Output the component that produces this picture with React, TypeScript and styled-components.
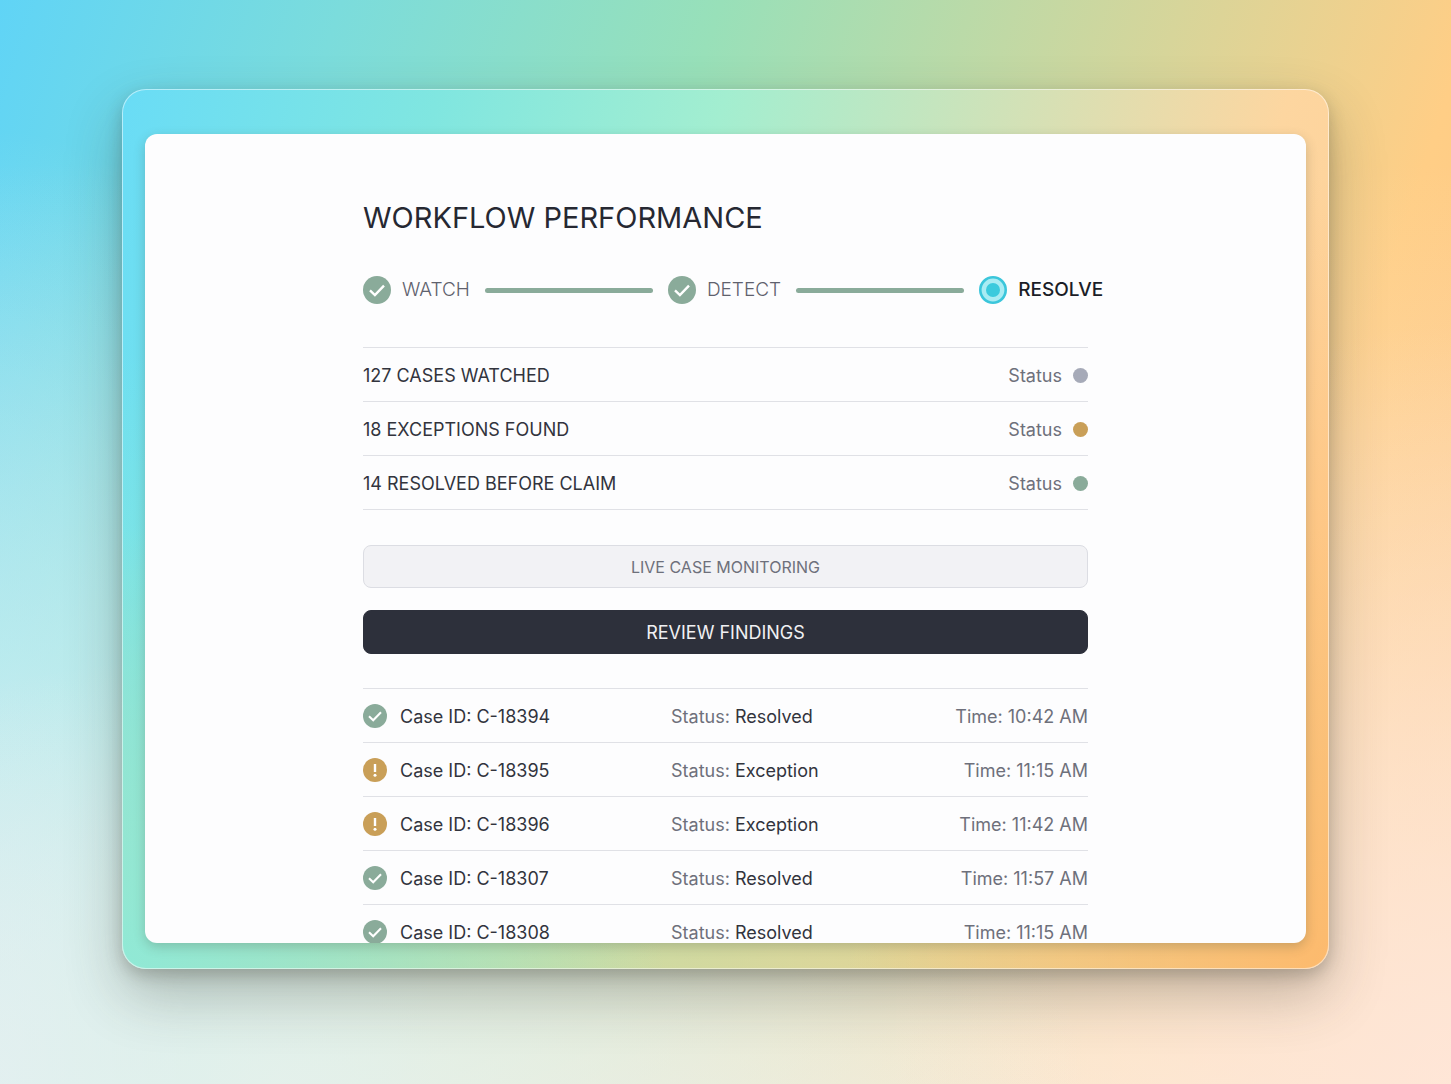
import React from "react";
import styled, { createGlobalStyle } from "styled-components";

const GlobalStyle = createGlobalStyle`
  *, *::before, *::after { box-sizing: border-box; }
  body {
    margin: 0;
    font-family: Inter, "Liberation Sans", sans-serif;
    color: #32343d;
    -webkit-font-smoothing: antialiased;
  }
`;

const sage = "#8aab9a";
const amber = "#c99f58";
const rule = "#e0e1e6";
const muted = "#6e707b";

const Page = styled.div`
  display: flex;
  height: 100vh;
  min-height: 480px;
  padding: 89px 122px 115px;
  background:
    radial-gradient(ellipse 55% 40% at 20% 100%, rgba(230, 241, 236, 0.85) 0%, rgba(232, 240, 230, 0) 100%),
    radial-gradient(ellipse 30% 88% at 0% 100%, rgba(222, 238, 244, 1) 0%, rgba(200, 240, 244, 0.6) 45%, rgba(160, 232, 236, 0) 100%),
    radial-gradient(ellipse 40% 70% at 100% 100%, rgba(255, 230, 216, 0.9) 0%, rgba(255, 228, 208, 0) 100%),
    linear-gradient(180deg, rgba(250, 240, 228, 0) 15%, rgba(250, 240, 228, 0.36) 60%, rgba(250, 240, 228, 0.74) 100%),
    linear-gradient(108deg, #60d4f6 0%, #7bdcdc 19%, #98e0b9 40%, #ffce86 82%, #ffc284 100%);
`;

const Frame = styled.div`
  display: flex;
  flex: 1;
  min-width: 0;
  padding: 44px 22px 25px;
  border: 1px solid rgba(255, 255, 255, 0.5);
  border-radius: 24px;
  background:
    radial-gradient(ellipse 45% 70% at 0% 100%, rgba(142, 234, 216, 0.95) 0%, rgba(142, 234, 216, 0) 100%) border-box,
    radial-gradient(ellipse 40% 90% at 100% 100%, rgba(255, 184, 106, 0.9) 0%, rgba(255, 184, 106, 0) 100%) border-box,
    linear-gradient(180deg, rgba(220, 208, 138, 0) 50%, rgba(220, 208, 138, 0.6) 100%) border-box,
    linear-gradient(105deg, #69dcf6 0%, #80e6e0 22%, #a3eed0 42%, #fdd6a0 81%, #ffcd92 100%) border-box;
  box-shadow: 0 26px 56px rgba(60, 60, 50, 0.3), 0 6px 16px rgba(60, 60, 50, 0.26);
`;

const Panel = styled.main`
  flex: 1;
  min-width: 0;
  padding: 64px 24px 0;
  overflow: hidden;
  border-radius: 12px;
  background: #fdfdfe;
  box-shadow: 0 4px 12px rgba(60, 70, 50, 0.24);
`;

const Content = styled.div`
  display: flex;
  flex-direction: column;
  max-width: 725px;
  margin: 0 auto;
`;

const Title = styled.h1`
  margin: 0;
  color: #262832;
  font-size: 29px;
  font-weight: 400;
  line-height: 40px;
`;

const Steps = styled.ol`
  display: flex;
  align-items: center;
  gap: 15px;
  margin: 37px 0 42px;
  padding: 0;
  list-style: none;
`;

const Step = styled.li<{ $active?: boolean }>`
  display: flex;
  flex: none;
  align-items: center;
  gap: 11px;
  font-size: 19px;
  line-height: 30px;
  font-weight: ${(p) => (p.$active ? 500 : 300)};
  color: ${(p) => (p.$active ? "#1b1d27" : "#5f616d")};
`;

const Connector = styled.li`
  flex: none;
  width: 168px;
  height: 5px;
  border-radius: 3px;
  background: ${sage};
`;

const Metrics = styled.ul`
  margin: 0 0 35px;
  padding: 0;
  border-top: 1px solid ${rule};
  list-style: none;
`;

const Metric = styled.li`
  display: flex;
  align-items: center;
  justify-content: space-between;
  height: 54px;
  padding-top: 1px;
  border-bottom: 1px solid ${rule};
  font-size: 18px;
`;

const MetricStatus = styled.span`
  display: flex;
  align-items: center;
  gap: 11px;
  color: ${muted};
`;

const Dot = styled.span<{ $color: string }>`
  width: 15px;
  height: 15px;
  border-radius: 50%;
  background: ${(p) => p.$color};
`;

const Actions = styled.div`
  display: grid;
  gap: 22px;
  margin-bottom: 34px;
`;

const Button = styled.button<{ $primary?: boolean }>`
  height: ${(p) => (p.$primary ? 44 : 43)}px;
  padding: 0;
  border: 1px solid ${(p) => (p.$primary ? "#2d303b" : "#dcdde3")};
  border-radius: 8px;
  background: ${(p) => (p.$primary ? "#2d303b" : "#f2f2f5")};
  color: ${(p) => (p.$primary ? "#f0f0f3" : muted)};
  font-family: inherit;
  font-size: ${(p) => (p.$primary ? 18 : 16)}px;
  font-weight: 400;
  cursor: pointer;
`;

const Cases = styled.table`
  width: 100%;
  table-layout: fixed;
  border-collapse: separate;
  border-spacing: 0;
  border-top: 1px solid ${rule};
  font-size: 18px;
`;

const Cell = styled.td<{ $width?: string; $end?: boolean }>`
  width: ${(p) => p.$width ?? "auto"};
  height: 54px;
  padding: 1px 0 0;
  border-bottom: 1px solid ${rule};
  color: ${(p) => (p.$end ? muted : "inherit")};
  text-align: ${(p) => (p.$end ? "right" : "left")};
  white-space: nowrap;
`;

const CaseName = styled.span`
  display: flex;
  align-items: center;
  gap: 13px;
`;

const Label = styled.span`
  color: ${muted};
`;

const Icon = styled.svg`
  display: block;
  flex: none;
`;

const CheckIcon = ({ size }: { size: number }) => (
  <Icon width={size} height={size} viewBox="0 0 28 28" aria-hidden="true">
    <circle cx="14" cy="14" r="14" fill={sage} />
    <path d="M7 14.4 11.9 19 21 9.6" fill="none" stroke="#fff" strokeWidth="2.4" />
  </Icon>
);

const AlertIcon = ({ size }: { size: number }) => (
  <Icon width={size} height={size} viewBox="0 0 24 24" aria-hidden="true">
    <circle cx="12" cy="12" r="12" fill={amber} />
    <path d="M12 6V14" stroke="#fff" strokeWidth="2.4" />
    <circle cx="12" cy="17.2" r="1.5" fill="#fff" />
  </Icon>
);

const CurrentIcon = () => (
  <Icon width="28" height="28" viewBox="0 0 28 28" aria-hidden="true">
    <circle cx="14" cy="14" r="12.7" fill="#a9ecf3" stroke="#3bc6db" strokeWidth="2.6" />
    <circle cx="14" cy="14" r="7" fill="#3bcadd" />
  </Icon>
);

const metrics = [
  { label: "127 CASES WATCHED", color: "#a6aab8" },
  { label: "18 EXCEPTIONS FOUND", color: amber },
  { label: "14 RESOLVED BEFORE CLAIM", color: sage },
];

const cases = [
  { id: "C-18394", status: "Resolved", time: "10:42 AM" },
  { id: "C-18395", status: "Exception", time: "11:15 AM" },
  { id: "C-18396", status: "Exception", time: "11:42 AM" },
  { id: "C-18307", status: "Resolved", time: "11:57 AM" },
  { id: "C-18308", status: "Resolved", time: "11:15 AM" },
];

export default function App() {
  return (
    <>
      <GlobalStyle />
      <Page>
        <Frame>
          <Panel>
            <Content>
              <Title>WORKFLOW PERFORMANCE</Title>
              <Steps>
                <Step><CheckIcon size={28} />WATCH</Step>
                <Connector aria-hidden="true" />
                <Step><CheckIcon size={28} />DETECT</Step>
                <Connector aria-hidden="true" />
                <Step $active aria-current="step"><CurrentIcon />RESOLVE</Step>
              </Steps>
              <Metrics>
                {metrics.map((m) => (
                  <Metric key={m.label}>
                    {m.label}
                    <MetricStatus>Status<Dot $color={m.color} /></MetricStatus>
                  </Metric>
                ))}
              </Metrics>
              <Actions>
                <Button type="button">LIVE CASE MONITORING</Button>
                <Button type="button" $primary>REVIEW FINDINGS</Button>
              </Actions>
              <Cases>
                <tbody>
                  {cases.map((c) => (
                    <tr key={c.id}>
                      <Cell $width="308px">
                        <CaseName>
                          {c.status === "Resolved" ? <CheckIcon size={24} /> : <AlertIcon size={24} />}
                          Case ID: {c.id}
                        </CaseName>
                      </Cell>
                      <Cell><Label>Status:</Label> {c.status}</Cell>
                      <Cell $end>Time: {c.time}</Cell>
                    </tr>
                  ))}
                </tbody>
              </Cases>
            </Content>
          </Panel>
        </Frame>
      </Page>
    </>
  );
}
